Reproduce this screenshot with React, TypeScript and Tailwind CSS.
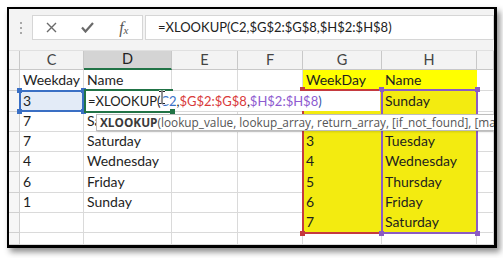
import React from "react";

const colW = ["w-[11px]", "w-[64px]", "w-[88px]", "w-[66px]", "w-[65px]", "w-[79px]", "w-[95px]", "w-[17px]"];
const rowH = ["h-[21px]", "h-[21px]", "h-[20px]", "h-[20px]", "h-[20px]", "h-[21px]", "h-[20px]", "h-[20px]", "h-[12px]"];

const LINE = "border-[#dadada]";
const Y1 = "bg-[#ffff00] border-[#ffff00]";
const Y2 = "bg-[#f3eb10] border-[#f3eb10]";
const BLUE = "bg-[#e3ebf7] border-[#dadada]";

type Cell = { t?: string; c?: string };

// columns C..I
const rows: Cell[][] = [
  [{ t: "Weekday" }, { t: "Name" }, {}, {}, { t: "WeekDay", c: Y1 }, { t: "Name", c: Y1 }, {}],
  [{ t: "3", c: BLUE }, {}, {}, {}, { t: "1", c: Y2 }, { t: "Sunday", c: Y2 }, {}],
  [{ t: "7" }, { t: "Saturday" }, {}, {}, { t: "2", c: Y2 }, { t: "Monday", c: Y2 }, {}],
  [{ t: "7" }, { t: "Saturday" }, {}, {}, { t: "3", c: Y2 }, { t: "Tuesday", c: Y2 }, {}],
  [{ t: "4" }, { t: "Wednesday" }, {}, {}, { t: "4", c: Y2 }, { t: "Wednesday", c: Y2 }, {}],
  [{ t: "6" }, { t: "Friday" }, {}, {}, { t: "5", c: Y2 }, { t: "Thursday", c: Y2 }, {}],
  [{ t: "1" }, { t: "Sunday" }, {}, {}, { t: "6", c: Y2 }, { t: "Friday", c: Y2 }, {}],
  [{}, {}, {}, {}, { t: "7", c: Y2 }, { t: "Saturday", c: Y2 }, {}],
  [{}, {}, {}, {}, {}, {}, {}],
];

const letters = ["C", "D", "E", "F", "G", "H", ""];

function Handle({ cls }: { cls: string }) {
  return <div className={`absolute h-[5px] w-[5px] ${cls}`} />;
}

function FormulaText() {
  return (
    <span>
      <span className="text-[#222]">=XLOOKUP(</span>
      <span className="text-[#3b72c6]">C2</span>
      <span className="text-[#222]">,</span>
      <span className="text-[#d93a3a]">$G$2:$G$8</span>
      <span className="text-[#222]">,</span>
      <span className="text-[#8e5bd0]">$H$2:$H$8</span>
      <span className="text-[#3355aa]">)</span>
    </span>
  );
}

function FormulaBar() {
  return (
    <div className="flex h-[41px] items-start bg-[#f3f3f3] pt-[6px]">
      <div className="flex h-[25px] w-[23px] flex-col items-center justify-center gap-[3px] pl-[1px]">
        <span className="h-[2px] w-[2px] bg-[#a8a8a8]" />
        <span className="h-[2px] w-[2px] bg-[#a8a8a8]" />
        <span className="h-[2px] w-[2px] bg-[#a8a8a8]" />
      </div>
      <div className="flex h-[25px] w-[111px] border border-[#d6d6d6] bg-white">
        <div className="flex w-[37px] items-center justify-center">
          <svg width="11" height="11" viewBox="0 0 11 11">
            <path d="M1 1L10 10M10 1L1 10" stroke="#6a6a6a" strokeWidth="1.4" />
          </svg>
        </div>
        <div className="flex w-[37px] items-center justify-center">
          <svg width="13" height="11" viewBox="0 0 13 11">
            <path d="M1 5.5L4.5 9.5L12 1" fill="none" stroke="#6a6a6a" strokeWidth="2.2" />
          </svg>
        </div>
        <div className="flex w-[37px] items-center justify-center font-[family-name:'Liberation_Serif',serif] italic text-[#555]">
          <span className="text-[16px] leading-none">f</span>
          <span className="mt-[5px] text-[11px] leading-none">x</span>
        </div>
      </div>
      <div className="ml-[2px] flex h-[25px] flex-1 items-center whitespace-nowrap border border-[#d6d6d6] bg-white pl-[12px] text-[13px] text-[#222]">
        =XLOOKUP(C2,$G$2:$G$8,$H$2:$H$8)
      </div>
    </div>
  );
}

function Sheet() {
  return (
    <div className="relative">
      {/* column headers */}
      <div className="flex h-[20px] border-t border-[#e0e0e0] bg-[#f3f3f3]">
        <div className={`${colW[0]} border-r border-b border-[#c8c8c8]`} />
        {letters.map((l, i) => (
          <div
            key={i}
            className={`${colW[i + 1]} flex items-center justify-center border-r text-[14.5px] leading-none ${
              l === "D"
                ? "border-b-2 border-r-[#c8c8c8] border-b-[#217346] bg-[#d4d4d4] text-[#222]"
                : "border-b border-[#c8c8c8] text-[#444]"
            }`}
          >
            {l}
          </div>
        ))}
      </div>

      {/* rows */}
      {rows.map((r, ri) => (
        <div key={ri} className={`flex ${rowH[ri]}`}>
          <div className={`${colW[0]} border-r border-b border-[#d0d0d0] bg-[#f6f6f6]`} />
          {r.map((c, ci) => (
            <div
              key={ci}
              className={`${colW[ci + 1]} flex items-end whitespace-nowrap border-r border-b pb-[2px] pl-[3px] text-[14px] leading-[16px] text-[#1e1e1e] ${
                c.c ?? `bg-white ${LINE}`
              }`}
            >
              {c.t}
            </div>
          ))}
        </div>
      ))}

      {/* C2 reference */}
      <div className="absolute left-[10px] top-[40px] h-[22px] w-[65px] border-2 border-[#3a6fc4]" />
      <Handle cls="left-[8px] top-[38px] bg-[#3a6fc4]" />
      <Handle cls="left-[72px] top-[38px] bg-[#3a6fc4]" />
      <Handle cls="left-[8px] top-[59px] bg-[#3a6fc4]" />
      <Handle cls="left-[72px] top-[59px] bg-[#3a6fc4]" />

      {/* G2:G8 and H2:H8 references */}
      <div className="absolute left-[293px] top-[39px] h-[145px] w-[81px] border-2 border-[#c53a3f]" />
      <Handle cls="left-[291px] top-[37px] bg-[#c53a3f]" />
      <Handle cls="left-[291px] top-[181px] bg-[#c53a3f]" />
      <div className="absolute left-[372px] top-[39px] h-[145px] w-[97px] border-2 border-[#8b5cc4]" />
      <Handle cls="left-[370px] top-[37px] bg-[#8b5cc4]" />
      <Handle cls="left-[466px] top-[37px] bg-[#8b5cc4]" />
      <Handle cls="left-[370px] top-[181px] bg-[#8b5cc4]" />
      <Handle cls="left-[466px] top-[181px] bg-[#8b5cc4]" />

      {/* active cell D2 being edited */}
      <div className="absolute left-[77px] top-[41px] flex h-[20px] w-[294px] items-end whitespace-nowrap bg-white pb-[2px] pl-[2px] text-[13px] leading-[16px]">
        <FormulaText />
      </div>
      <div className="absolute left-[75px] top-[39px] h-[24px] w-[89px] border-y-2 border-l-2 border-[#217346]" />
      <Handle cls="left-[161px] top-[59px] bg-[#217346]" />

      {/* argument tooltip */}
      <div className="absolute left-[87px] top-[64px] flex h-[17px] w-[430px] items-center whitespace-nowrap border border-[#bdbdbd] bg-white pl-[3px] font-[family-name:'Open_Sans',sans-serif] text-[11.8px] leading-none text-[#555] shadow-[1px_1px_2px_rgba(0,0,0,0.15)]">
        <span className="font-bold text-[#3a3a3a]">XLOOKUP</span>
        <span>(lookup_value, lookup_array, return_array, [if_not_found], [match_mode], [search_mode])</span>
      </div>

      {/* mouse I-beam */}
      <svg className="absolute left-[149px] top-[40px]" width="8" height="15" viewBox="0 0 8 15">
        <path d="M1 1.5h2.5M4.5 1.5h2.5M4 1.5v12M1 13.5h2.5M4.5 13.5h2.5" stroke="#fff" strokeWidth="2.5" fill="none" />
        <path d="M1 1.5h2.5M4.5 1.5h2.5M4 1.5v12M1 13.5h2.5M4.5 13.5h2.5" stroke="#222" strokeWidth="1" fill="none" />
      </svg>
    </div>
  );
}

export default function App() {
  return (
    <div className="h-[258px] w-[503px] bg-white pl-[7px] pt-[7px] font-[family-name:Lato,sans-serif]">
      <div className="h-[241px] w-[490px] overflow-hidden border-2 border-r-[3px] border-b-[3px] border-black bg-white shadow-[3px_4px_6px_rgba(0,0,0,0.45)]">
        <FormulaBar />
        <Sheet />
      </div>
    </div>
  );
}
